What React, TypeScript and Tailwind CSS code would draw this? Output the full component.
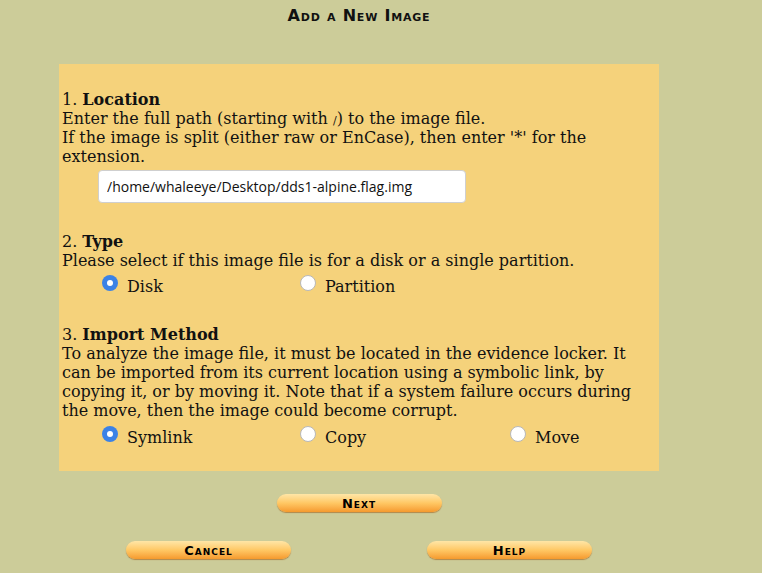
const serif = "font-['DejaVu_Serif',serif]";

const Radio = ({ checked }: { checked?: boolean }) => (
  <span
    className={
      checked
        ? "mt-[-2px] flex h-4 w-4 shrink-0 items-center justify-center rounded-full bg-[#3b82e6]"
        : "mt-[-2px] h-4 w-4 shrink-0 rounded-full border border-[#b8b8b8] bg-white"
    }
  >
    {checked && <span className="h-[6px] w-[6px] rounded-full bg-white" />}
  </span>
);

const Option = ({ label, checked, width }: { label: string; checked?: boolean; width: string }) => (
  <div className={`flex items-start gap-[9px] ${width}`}>
    <Radio checked={checked} />
    <span>{label}</span>
  </div>
);

const PillButton = ({ label }: { label: string }) => (
  <button className="flex h-[18px] w-[165px] items-center justify-center rounded-full bg-gradient-to-b from-[#ffe6a6] via-[#ffc864] to-[#f59a2c] shadow-[0_1px_1px_rgba(160,90,20,0.6)] font-['DejaVu_Sans',sans-serif] text-[13px] font-bold leading-none tracking-[1px] text-black [font-variant:small-caps]">
    {label}
  </button>
);

export default function App() {
  return (
    <div className="min-h-screen w-full bg-[#cccc99]">
      <div className="ml-[59px] w-[600px]">
        <h1 className="pt-[6px] text-center font-['DejaVu_Sans',sans-serif] text-[16px] font-bold leading-[20px] tracking-[0.8px] text-[#111] [font-variant:small-caps]">
          Add a New Image
        </h1>

        <div className={`mt-[38px] h-[407px] bg-[#f5d27b] px-[3px] pt-[26px] text-[16px] leading-[19px] text-[#111] ${serif}`}>
          <p>
            1. <b>Location</b>
            <br />
            Enter the full path (starting with <span className="text-[11px] leading-none">/</span>) to the image file.
            <br />
            If the image is split (either raw or EnCase), then enter '*' for the extension.
          </p>
          <input
            type="text"
            defaultValue="/home/whaleeye/Desktop/dds1-alpine.flag.img"
            className="ml-[36px] mt-[4px] h-[33px] w-[368px] rounded-[4px] border border-[#cfcfcf] bg-white px-[8px] font-['Open_Sans',sans-serif] text-[14px] text-[#111] outline-none"
          />

          <p className="mt-[29px]">
            2. <b>Type</b>
            <br />
            Please select if this image file is for a disk or a single partition.
          </p>
          <div className="mt-[7px] flex pl-[40px]">
            <Option label="Disk" checked width="w-[198px]" />
            <Option label="Partition" width="w-[210px]" />
          </div>

          <p className="mt-[29px]">
            3. <b>Import Method</b>
            <br />
            To analyze the image file, it must be located in the evidence locker. It can be imported from its
            current location using a symbolic link, by copying it, or by moving it. Note that if a system failure
            occurs during the move, then the image could become corrupt.
          </p>
          <div className="mt-[8px] flex pl-[40px]">
            <Option label="Symlink" checked width="w-[198px]" />
            <Option label="Copy" width="w-[210px]" />
            <Option label="Move" width="w-[120px]" />
          </div>
        </div>

        <div className="mt-[23px] flex justify-center">
          <PillButton label="Next" />
        </div>
        <div className="mt-[29px] flex justify-between pl-[67px] pr-[67px]">
          <PillButton label="Cancel" />
          <PillButton label="Help" />
        </div>
      </div>
    </div>
  );
}
